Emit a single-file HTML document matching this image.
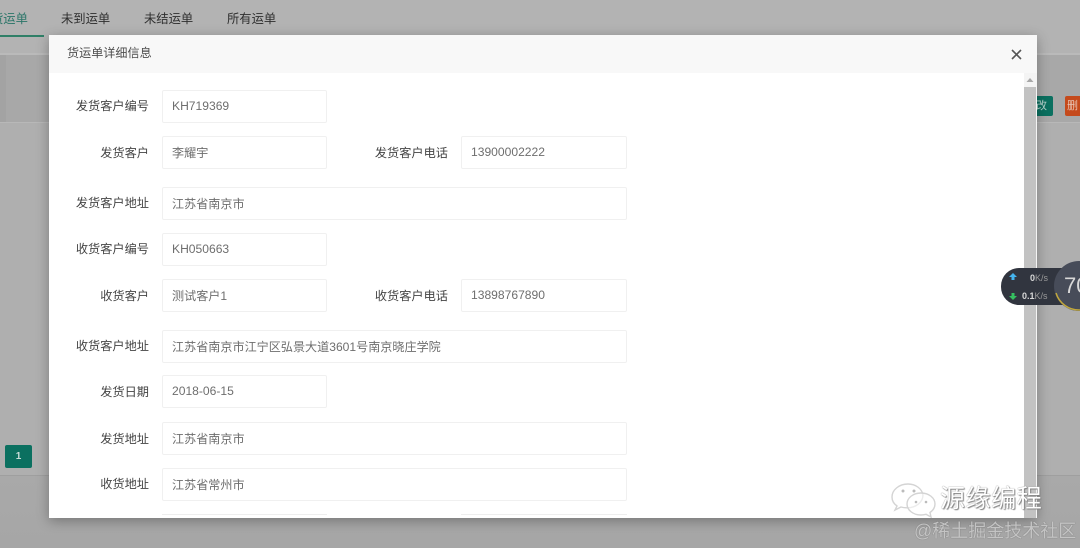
<!DOCTYPE html>
<html lang="zh">
<head>
<meta charset="utf-8">
<title>货运单详细信息</title>
<style>
html,body{margin:0;padding:0}
body{width:1080px;height:547px;overflow:hidden;position:relative;background:#afafaf;font-family:"Liberation Sans","Noto Sans CJK SC",sans-serif;}
.a{position:absolute}
.tab{position:absolute;top:10px;font-size:12.3px;line-height:18px;color:#2e2e2e;white-space:nowrap}
.lbl{position:absolute;font-size:12.2px;line-height:18px;color:#444;text-align:right;white-space:nowrap;right:931px;margin-top:1px}
.inp{position:absolute;left:162px;width:154px;height:31px;border:1px solid #f0f0f0;border-radius:2px;background:#fff;padding-left:9px;font-size:12.1px;line-height:30px;color:#6e6e6e;white-space:nowrap;box-sizing:content-box}
.cn{line-height:32px}
.w{width:454px}
.r{left:461px;width:155px}
</style>
</head>
<body>
<div class="a" style="left:0;top:0;width:1080px;height:54px;background:#b3b3b3"></div>
<div class="a" style="left:0;top:53px;width:1080px;height:2px;background:#bababa"></div>
<div class="a" style="left:6px;top:55px;width:1074px;height:67px;background:#a8a8a8"></div>
<div class="a" style="left:0;top:55px;width:6px;height:67px;background:#a3a3a3"></div>
<div class="a" style="left:0;top:122px;width:1080px;height:1px;background:#b8b8b8"></div>
<div class="a" style="left:0;top:475px;width:1080px;height:72px;background:linear-gradient(#a9a9a9,#a6a6a6);border-top:1px solid #9f9f9f"></div>
<div class="tab" style="left:-9px;color:#2a7568">货运单</div>
<div class="a" style="left:0;top:35px;width:44px;height:2px;background:#2f7f67"></div>
<div class="tab" style="left:61px">未到运单</div>
<div class="tab" style="left:144px">未结运单</div>
<div class="tab" style="left:227px">所有运单</div>
<div class="a" style="left:5px;top:445px;width:27px;height:23px;background:#0b7060;border-radius:2px;color:#c8dcd8;font-size:10px;font-weight:bold;line-height:23px;text-align:center">1</div>
<div class="a" style="left:1037px;top:96px;width:16px;height:20px;background:#0b7060;border-radius:0 2px 2px 0;color:#b8d4cf;font-size:11px;line-height:20px;white-space:nowrap;overflow:hidden;text-indent:-1px">改</div>
<div class="a" style="left:1065px;top:96px;width:15px;height:20px;background:#c54a1c;border-radius:2px 0 0 2px;color:#e8c4b4;font-size:11px;line-height:20px;white-space:nowrap;overflow:hidden;text-indent:2px">删</div>

<div class="a" style="left:49px;top:35px;width:988px;height:483px;background:#fff;box-shadow:0 3px 12px rgba(0,0,0,.3);overflow:hidden">
  <div class="a" style="left:0;top:0;width:988px;height:38px;background:#f8f8f8"></div>
  <div class="a" style="left:18px;top:9px;font-size:12.1px;line-height:18px;color:#4d4d4d">货运单详细信息</div>
  <svg class="a" style="left:962px;top:14px" width="11" height="11" viewBox="0 0 11 11"><path d="M1 1L10 10M10 1L1 10" stroke="#555" stroke-width="1.6" fill="none"/></svg>
  <div class="a" style="left:975px;top:38px;width:13px;height:445px;background:#f4f4f4"></div>
  <div class="a" style="left:975px;top:52px;width:12px;height:431px;background:#c2c2c2"></div>
  <svg class="a" style="left:977px;top:42px" width="8" height="6" viewBox="0 0 8 6"><path d="M4 1L7.5 5H.5Z" fill="#a8a8a8"/></svg>
</div>

<div class="lbl" style="top:96px">发货客户编号</div>
<div class="inp" style="top:90px">KH719369</div>
<div class="lbl" style="top:143px">发货客户</div>
<div class="inp cn" style="top:136px">李耀宇</div>
<div class="lbl" style="top:143px;right:632px">发货客户电话</div>
<div class="inp r" style="top:136px">13900002222</div>
<div class="lbl" style="top:193px">发货客户地址</div>
<div class="inp w cn" style="top:187px">江苏省南京市</div>
<div class="lbl" style="top:239px">收货客户编号</div>
<div class="inp" style="top:233px">KH050663</div>
<div class="lbl" style="top:286px">收货客户</div>
<div class="inp cn" style="top:279px">测试客户1</div>
<div class="lbl" style="top:286px;right:632px">收货客户电话</div>
<div class="inp r" style="top:279px">13898767890</div>
<div class="lbl" style="top:336px">收货客户地址</div>
<div class="inp w cn" style="top:330px">江苏省南京市江宁区弘景大道3601号南京晓庄学院</div>
<div class="lbl" style="top:382px">发货日期</div>
<div class="inp" style="top:375px">2018-06-15</div>
<div class="lbl" style="top:429px">发货地址</div>
<div class="inp w cn" style="top:422px">江苏省南京市</div>
<div class="lbl" style="top:474px">收货地址</div>
<div class="inp w cn" style="top:468px">江苏省常州市</div>
<div class="a" style="left:162px;top:514px;width:165px;height:4px;border-top:1px solid #eee;box-sizing:border-box"></div>
<div class="a" style="left:461px;top:514px;width:166px;height:4px;border-top:1px solid #eee;box-sizing:border-box"></div>

<div class="a" style="left:1001px;top:268px;width:90px;height:37px;background:#31353f;border-radius:18px"></div>
<svg class="a" style="left:1009px;top:273px" width="8" height="27" viewBox="0 0 8 27"><path d="M4 0L8 4H5.5V7H2.5V4H0Z" fill="#45b4ee"/><path d="M4 27L8 23H5.5V20H2.5V23H0Z" fill="#35c060"/></svg>
<div class="a" style="left:1030px;top:272px;font-size:9px;line-height:12px;color:#d8d8d8;font-weight:bold;white-space:nowrap">0<span style="font-weight:normal;color:#9a9a9a">K/s</span></div>
<div class="a" style="left:1022px;top:290px;font-size:9px;line-height:12px;color:#d8d8d8;font-weight:bold;white-space:nowrap">0.1<span style="font-weight:normal;color:#9a9a9a">K/s</span></div>
<div class="a" style="left:1054px;top:261px;width:50px;height:50px;border-radius:50%;background:#474c59"></div>
<svg class="a" style="left:1054px;top:261px" width="26" height="50" viewBox="0 0 26 50"><path d="M2 32A24 24 0 0 0 26 49" stroke="#c2a83c" stroke-width="1.5" fill="none"/></svg>
<div class="a" style="left:1064px;top:272px;font-size:22px;line-height:28px;color:#d8d8d8;white-space:nowrap">70</div>

<svg class="a" style="left:890px;top:482px" width="48" height="36" viewBox="0 0 48 36"><g fill="#fff" fill-opacity=".55" stroke="#d4d4d4" stroke-width="1.4"><path d="M18 2C9 2 2 8 2 15c0 4 2 7 5 9l-2 4 6-3c2 .6 4 .8 6 .8C26 26 33 20 33 13 32 7 26 2 18 2Z"/><path d="M31 11c-8 0-14 5-14 11s6 11 14 11c2 0 3-.2 5-.7l5 2.700-1-4.500c3-2 5-5 5-8.500 0-6-6-11-14-11Z"/></g><g fill="#bbb"><circle cx="13" cy="9" r="1.500"/><circle cx="24" cy="9" r="1.500"/><circle cx="26" cy="20" r="1.300"/><circle cx="36" cy="20" r="1.300"/></g></svg>
<div class="a" style="left:940px;top:484px;font-size:25px;line-height:30px;color:#fff;white-space:nowrap;letter-spacing:.6px;text-shadow:0 0 1px #666,1px 1px 1px #888">源缘编程</div>
<div class="a" style="left:914px;top:520px;font-size:18px;line-height:22px;color:#c4c4c4;white-space:nowrap;text-shadow:0 0 1px #666">@稀土掘金技术社区</div>
</body>
</html>
